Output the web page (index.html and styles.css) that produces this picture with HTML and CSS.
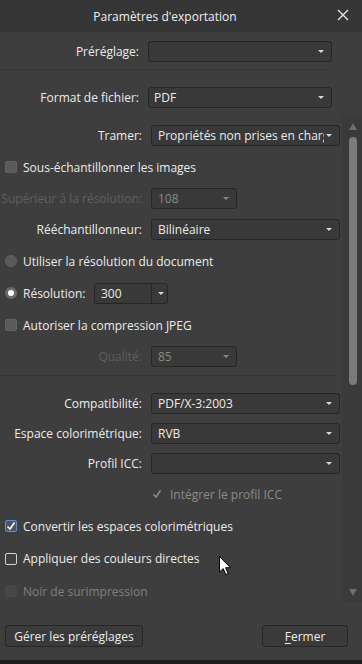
FILE: index.html
```html
<!DOCTYPE html>
<html lang="fr">
<head>
    <meta charset="UTF-8">
    <meta name="viewport" content="width=device-width, initial-scale=1.0">
    <title>Paramètres d'exportation</title>
    <link rel="stylesheet" href="styles.css">
</head>
<body>

<div class="dialog">
    <div class="titlebar">
        <span class="title">Paramètres d'exportation</span>
        <svg class="close" width="12" height="12" viewBox="0 0 12 12">
            <path d="M1 1 L11 11 M11 1 L1 11" stroke="#e6e6e6" stroke-width="1.4" fill="none"/>
        </svg>
    </div>

    <div class="head">
        <div class="field top">
            <span class="label">Préréglage:</span>
            <div class="select"><span class="value"></span><i class="caret"></i></div>
        </div>
        <div class="sep"></div>
        <div class="field top">
            <span class="label">Format de fichier:</span>
            <div class="select"><span class="value">PDF</span><i class="caret"></i></div>
        </div>
    </div>

    <div class="scroll">
        <div class="content">
            <div class="field">
                <span class="label">Tramer:</span>
                <div class="select"><span class="value">Propriétés non prises en charge</span><i class="caret"></i></div>
            </div>
            <div class="check-row">
                <span class="box"></span>
                <span>Sous-échantillonner les images</span>
            </div>
            <div class="field disabled">
                <span class="label">Supérieur à la résolution:</span>
                <div class="select short"><span class="value">108</span><i class="caret"></i></div>
            </div>
            <div class="field">
                <span class="label">Rééchantillonneur:</span>
                <div class="select"><span class="value">Bilinéaire</span><i class="caret"></i></div>
            </div>
            <div class="check-row">
                <span class="radio"></span>
                <span>Utiliser la résolution du document</span>
            </div>
            <div class="check-row">
                <span class="radio on"></span>
                <span class="res-label">Résolution:</span>
                <div class="combo">
                    <span class="value">300</span>
                    <span class="combo-btn"><i class="caret"></i></span>
                </div>
            </div>
            <div class="check-row">
                <span class="box"></span>
                <span>Autoriser la compression JPEG</span>
            </div>
            <div class="field disabled">
                <span class="label">Qualité:</span>
                <div class="select short"><span class="value">85</span><i class="caret"></i></div>
            </div>

            <div class="sep wide"></div>

            <div class="field tight">
                <span class="label">Compatibilité:</span>
                <div class="select"><span class="value">PDF/X-3:2003</span><i class="caret"></i></div>
            </div>
            <div class="field tight">
                <span class="label">Espace colorimétrique:</span>
                <div class="select"><span class="value">RVB</span><i class="caret"></i></div>
            </div>
            <div class="field tight">
                <span class="label">Profil ICC:</span>
                <div class="select"><span class="value"></span><i class="caret"></i></div>
            </div>
            <div class="check-row indent disabled">
                <span class="box ghost">
                    <svg width="12" height="12" viewBox="0 0 12 12"><path d="M2.5 6.5 L5 9 L9.5 2.5" stroke="#8a8a8a" stroke-width="1.6" fill="none"/></svg>
                </span>
                <span>Intégrer le profil ICC</span>
            </div>
            <div class="check-row">
                <span class="box checked">
                    <svg width="12" height="12" viewBox="0 0 12 12"><path d="M2.5 6.5 L5 9 L9.5 2.5" stroke="#ffffff" stroke-width="1.6" fill="none"/></svg>
                </span>
                <span>Convertir les espaces colorimétriques</span>
            </div>
            <div class="check-row tall">
                <span class="box hover"></span>
                <span>Appliquer des couleurs directes</span>
            </div>
            <div class="check-row disabled">
                <span class="box dim"></span>
                <span>Noir de surimpression</span>
            </div>
        </div>

        <div class="scrollbar">
            <i class="arrow up"></i>
            <span class="thumb"></span>
            <i class="arrow down"></i>
        </div>
    </div>

    <div class="footer">
        <button class="btn manage-btn">Gérer les préréglages</button>
        <button class="btn close-btn"><u>F</u>ermer</button>
    </div>

    <!-- pointeur de la souris -->
    <svg class="cursor" width="13" height="20" viewBox="0 0 13 20">
        <path d="M0.5 0.5 L0.5 16 L4.2 12.6 L6.8 18.6 L9.2 17.6 L6.6 11.7 L11.5 11.7 Z" fill="#ffffff" stroke="#000000" stroke-width="1"/>
    </svg>
    <div class="bottom-edge"></div>
</div>

</body>
</html>
```

FILE: styles.css
```css
* {
    box-sizing: border-box;
}

body {
    margin: 0;
    background-color: #3e3e3e;
    font-family: "Open Sans", "Noto Sans", sans-serif;
    font-size: 12px;
    color: #ececec;
}

.dialog {
    position: relative;
    width: 362px;
    height: 664px;
    background-color: #3e3e3e;
    display: flex;
    flex-direction: column;
    overflow: hidden;
}

/* barre de titre */
.titlebar {
    height: 32px;
    background-color: #363636;
    display: flex;
    align-items: center;
    justify-content: center;
    padding-right: 32px;
    flex-shrink: 0;
}

.title {
    font-size: 12px;
    color: #f0f0f0;
}

.close {
    position: absolute;
    top: 9px;
    right: 13px;
}

/* champs */
.head {
    padding-top: 4px;
    padding-bottom: 3px;
    flex-shrink: 0;
}

.field {
    display: flex;
    align-items: center;
    height: 31px;
}

.field.tight {
    height: 30px;
}

.label {
    width: 142px;
    text-align: right;
    white-space: nowrap;
    flex-shrink: 0;
}

.field.top .label {
    width: 139px;
}

.select {
    display: flex;
    align-items: center;
    width: 189px;
    height: 21px;
    margin-left: 9px;
    padding: 0 7px 0 6px;
    background-color: #393939;
    border: 1px solid #262626;
    border-radius: 3px;
    overflow: hidden;
}

.field.top .select {
    width: 184px;
    padding-left: 5px;
}

.select.short {
    width: 86px;
}

.value {
    flex: 1;
    white-space: nowrap;
    overflow: hidden;
    text-overflow: clip;
}

.caret {
    flex-shrink: 0;
    width: 0;
    height: 0;
    margin-left: 2px;
    border-left: 3px solid transparent;
    border-right: 3px solid transparent;
    border-top: 3px solid #d6d6d6;
}

.disabled .label,
.disabled > span {
    color: #5e5e5e;
}

.field.disabled .value {
    color: #8a8a8a;
}

.field.disabled .caret {
    border-top-color: #8a8a8a;
}

.sep {
    height: 1px;
    width: 328px;
    background-color: #343434;
    margin: 2px 0 12px;
}

.sep.wide {
    width: 337px;
    margin: 3px 0 12px;
}

/* zone défilante */
.scroll {
    display: flex;
    height: 486px;
    flex-shrink: 0;
}

.content {
    width: 342px;
    padding-top: 4px;
    overflow: hidden;
}

.scrollbar {
    width: 20px;
    background-color: #3a3a3a;
    display: flex;
    flex-direction: column;
    align-items: center;
    padding: 7px 0 6px 1px;
}

.arrow {
    width: 0;
    height: 0;
    border-left: 4px solid transparent;
    border-right: 4px solid transparent;
}

.arrow.up {
    border-bottom: 7px solid #6e6e6e;
}

.arrow.down {
    border-top: 7px solid #6e6e6e;
    margin-top: auto;
}

.thumb {
    width: 8px;
    height: 248px;
    margin-top: 7px;
    border-radius: 4px;
    background-color: #7b7b7b;
}

/* cases et boutons radio */
.check-row {
    display: flex;
    align-items: center;
    height: 32px;
    padding-left: 5px;
    white-space: nowrap;
}

.check-row.tall {
    height: 33px;
}

.check-row.indent {
    padding-left: 151px;
}

.box,
.radio {
    width: 12px;
    height: 12px;
    margin-right: 6px;
    flex-shrink: 0;
    background-color: #5a5a5a;
    border: 1px solid #626262;
    border-radius: 2px;
    display: flex;
    align-items: center;
    justify-content: center;
}

.check-row.indent .box {
    margin-right: 7px;
}

.box svg {
    margin: -1px;
}

.box.checked {
    background-color: #4b5566;
    border-color: #6b8cc4;
}

.box.hover {
    background-color: #404040;
    border-color: #d2d2d2;
}

.box.ghost {
    background-color: transparent;
    border-color: transparent;
}

.box.dim {
    background-color: #474747;
    border-color: #474747;
}

.check-row.disabled > span:last-child {
    color: #808080;
}

.check-row.indent.disabled > span:last-child {
    color: #8c8c8c;
}

.radio {
    border-radius: 50%;
}

.radio.on {
    background-color: #6a6a6a;
    border-color: #6a6a6a;
}

.radio.on::after {
    content: "";
    width: 6px;
    height: 6px;
    border-radius: 50%;
    background-color: #ffffff;
}

.res-label {
    width: 71px;
}

.combo {
    display: flex;
    align-items: center;
    width: 74px;
    height: 21px;
    padding-left: 6px;
    background-color: #393939;
    border: 1px solid #262626;
    border-radius: 3px;
}

.combo .value {
    flex: 1;
}

.combo-btn {
    width: 16px;
    height: 100%;
    border-left: 1px solid #262626;
    display: flex;
    align-items: center;
    justify-content: center;
}

/* pied */
.footer {
    display: flex;
    justify-content: space-between;
    padding: 23px 14px 0 5px;
}

.btn {
    height: 22px;
    padding: 0;
    font-family: inherit;
    font-size: 12px;
    color: #ececec;
    white-space: nowrap;
    background-color: #3a3a3a;
    border: 1px solid #262626;
    border-radius: 3px;
}

.manage-btn {
    width: 138px;
}

.close-btn {
    width: 86px;
}

.close-btn u {
    text-underline-offset: 2px;
}

.cursor {
    position: absolute;
    left: 219px;
    top: 556px;
}

.bottom-edge {
    position: absolute;
    left: 0;
    right: 0;
    bottom: 0;
    height: 4px;
    background-color: #1c1c1c;
}
```
